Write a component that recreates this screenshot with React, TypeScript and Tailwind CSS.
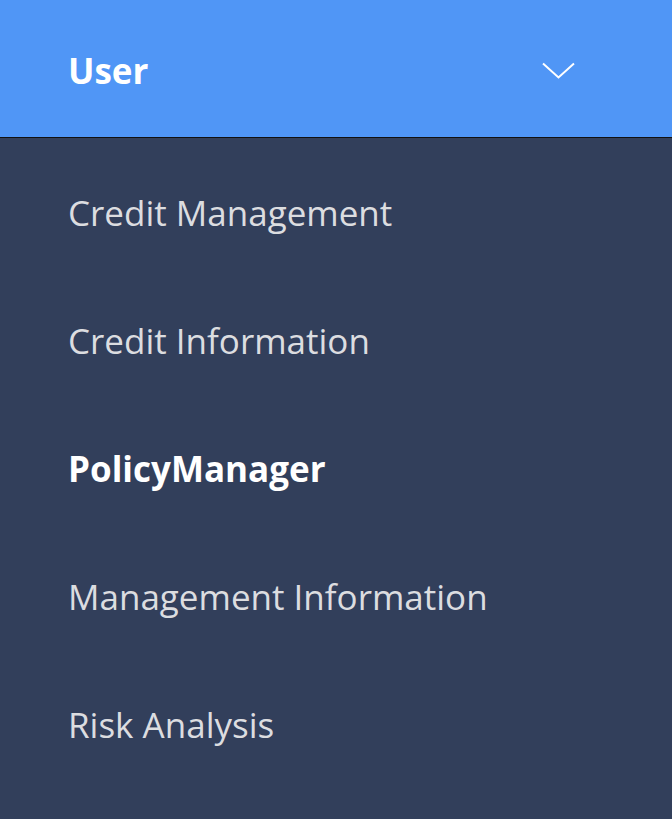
const items = [
  { label: "Credit Management", active: false },
  { label: "Credit Information", active: false },
  { label: "PolicyManager", active: true },
  { label: "Management Information", active: false },
  { label: "Risk Analysis", active: false },
];

export default function App() {
  return (
    <div
      className="flex min-h-[819px] w-[672px] flex-col bg-[#323f5b]"
      style={{ fontFamily: '"Open Sans", sans-serif' }}
    >
      <div className="flex h-[138px] items-center justify-between border-b border-[#111] bg-[#5096f6] pl-[68px] pr-[97px] pt-[3px]">
        <span className="text-[35px] font-bold leading-none text-white">User</span>
        <svg width="33" height="17" viewBox="0 0 33 17" fill="none">
          <path d="M1 1.5L16.5 15.5L32 1.5" stroke="white" strokeWidth="2" />
        </svg>
      </div>
      <nav className="flex flex-col pt-[11px]">
        {items.map((item) => (
          <div key={item.label} className="flex h-[128px] items-center pl-[68px]">
            <span
              className={
                item.active
                  ? "text-[35px] font-bold text-white"
                  : "text-[35px] font-normal text-[#dcdde0]"
              }
            >
              {item.label}
            </span>
          </div>
        ))}
      </nav>
    </div>
  );
}
